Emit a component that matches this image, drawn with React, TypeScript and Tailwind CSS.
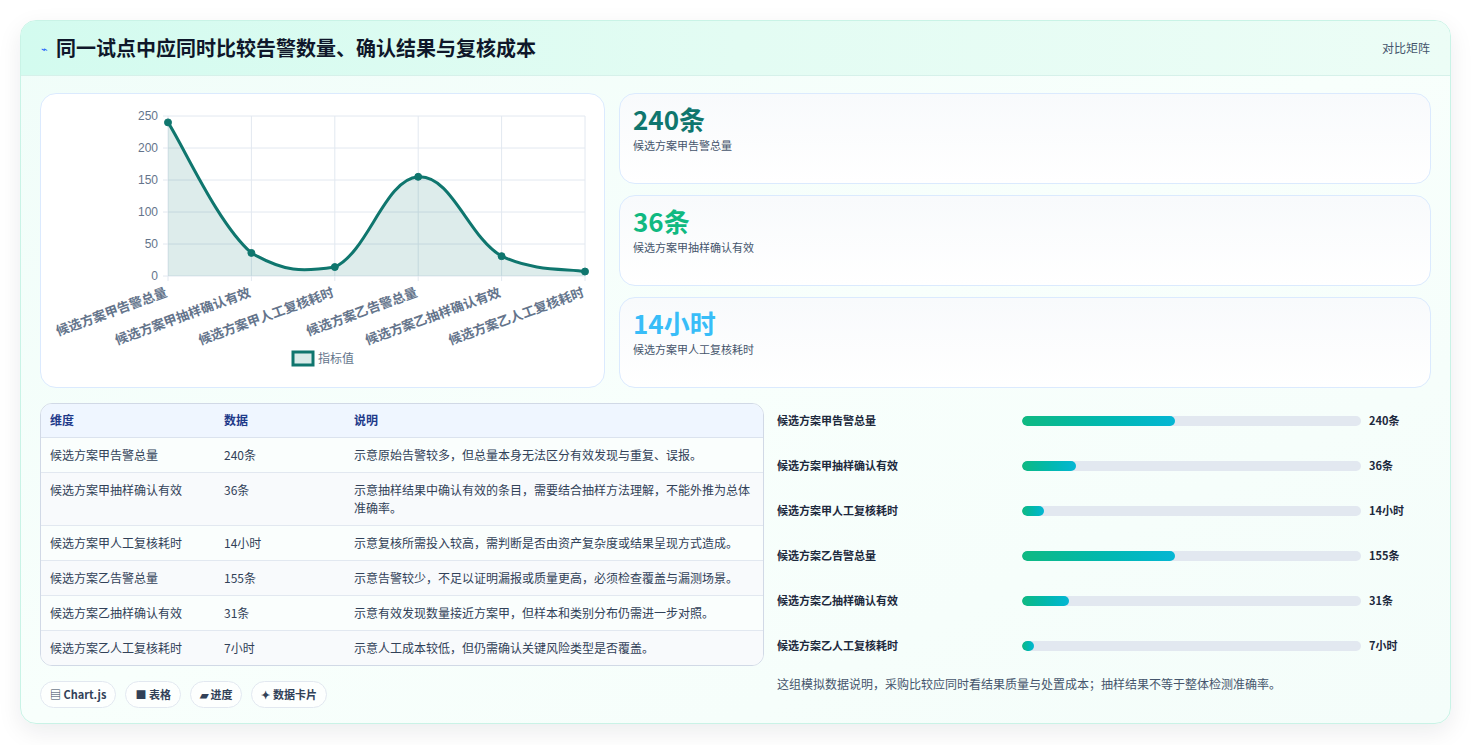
import React from "react";

const labels = ["候选方案甲告警总量","候选方案甲抽样确认有效","候选方案甲人工复核耗时","候选方案乙告警总量","候选方案乙抽样确认有效","候选方案乙人工复核耗时"];
const vals = [240,36,14,155,31,7];
const units = ["240条","36条","14小时","155条","31条","7小时"];
const pct = [45,16,6.5,45,14,3.5];
const desc = [
  "示意原始告警较多，但总量本身无法区分有效发现与重复、误报。",
  "示意抽样结果中确认有效的条目，需要结合抽样方法理解，不能外推为总体准确率。",
  "示意复核所需投入较高，需判断是否由资产复杂度或结果呈现方式造成。",
  "示意告警较少，不足以证明漏报或质量更高，必须检查覆盖与漏测场景。",
  "示意有效发现数量接近方案甲，但样本和类别分布仍需进一步对照。",
  "示意人工成本较低，但仍需确认关键风险类型是否覆盖。",
];

const X0 = 127, X1 = 544, Y0 = 22, Y1 = 182;
const pts = vals.map((v, i) => [X0 + (i * (X1 - X0)) / 5, Y1 - (v * (Y1 - Y0)) / 250]);

function curve() {
  let d = `M${pts[0][0]},${pts[0][1]}`;
  const t = 0.4;
  const cl = (y: number) => Math.min(y, Y1 - 4);
  for (let i = 0; i < pts.length - 1; i++) {
    const p0 = pts[i - 1] || pts[i], p1 = pts[i], p2 = pts[i + 1], p3 = pts[i + 2] || p2;
    const c1 = [p1[0] + (p2[0] - p0[0]) * t / 2, cl(p1[1] + (p2[1] - p0[1]) * t / 2)];
    const c2 = [p2[0] - (p3[0] - p1[0]) * t / 2, cl(p2[1] - (p3[1] - p1[1]) * t / 2)];
    d += ` C${c1[0]},${c1[1]} ${c2[0]},${c2[1]} ${p2[0]},${p2[1]}`;
  }
  return d;
}

function Chart() {
  const d = curve();
  return (
    <svg width="564" height="294" className="block" style={{ fontFamily: "'Noto Sans CJK SC', 'Liberation Sans', sans-serif" }}>
      {[0, 50, 100, 150, 200, 250].map((v) => {
        const y = Y1 - (v * (Y1 - Y0)) / 250;
        return (
          <g key={v}>
            <line x1={X0 - 5} x2={X1} y1={y} y2={y} stroke="#e2e8f0" />
            <text x={X0 - 10} y={y + 4} fontSize="12" fill="#64748b" textAnchor="end" fontFamily="'Liberation Sans', sans-serif">{v}</text>
          </g>
        );
      })}
      {pts.map((p, i) => (
        <line key={i} x1={p[0]} x2={p[0]} y1={Y0} y2={Y1 + 5} stroke="#e2e8f0" />
      ))}
      <path d={`${d} L${X1},${Y1} L${X0},${Y1} Z`} fill="#0f766e" fillOpacity="0.14" />
      <path d={d} fill="none" stroke="#0f766e" strokeWidth="3" />
      {pts.map((p, i) => (
        <circle key={i} cx={p[0]} cy={p[1]} r="3.5" fill="#0f766e" stroke="#0f766e" />
      ))}
      {pts.map((p, i) => (
        <text key={i} x={p[0]} y={Y1 + 20} fontSize="13" fontWeight="600" fill="#64748b" textAnchor="end" transform={`rotate(-20 ${p[0]} ${Y1 + 20})`}>{labels[i]}</text>
      ))}
      <rect x="252" y="258" width="20" height="13" fill="#d9ebe9" stroke="#0f766e" strokeWidth="3" />
      <text x="277" y="269" fontSize="12" fill="#64748b">指标值</text>
    </svg>
  );
}

export default function App() {
  return (
    <div className="min-h-screen bg-white p-5" style={{ fontFamily: "'Noto Sans CJK SC', 'Noto Sans', sans-serif" }}>
      <div className="w-[1431px] h-[704px] rounded-2xl border border-[#c9f3e6] overflow-hidden shadow-[0_8px_24px_rgba(15,23,42,0.08)] bg-gradient-to-br from-[#f0fdf9] via-[#f8fffc] to-[#f4fdfa] flex flex-col">
        <div className="h-[55px] flex items-center justify-between px-5 border-b border-[#d6f1ea] bg-gradient-to-r from-[#d3fbef] via-[#e3fcf3] to-[#ecfdf6]">
          <div className="flex items-center gap-2">
            <span className="text-[11px] text-blue-600">⌁</span>
            <h1 className="text-[20px] font-bold text-[#0f172a]">同一试点中应同时比较告警数量、确认结果与复核成本</h1>
          </div>
          <span className="text-[12px] text-slate-600">对比矩阵</span>
        </div>
        <div className="px-[19px] pt-[17px] flex flex-col">
          <div className="flex gap-[14px]">
            <div className="w-[565px] h-[295px] rounded-2xl border border-[#dbeafe] bg-white overflow-hidden">
              <Chart />
            </div>
            <div className="flex-1 flex flex-col gap-[11px]">
              {[["240条", "text-[#0f766e]", "候选方案甲告警总量"], ["36条", "text-[#10b981]", "候选方案甲抽样确认有效"], ["14小时", "text-[#38bdf8]", "候选方案甲人工复核耗时"]].map(([v, c, l]) => (
                <div key={l} className="h-[91px] rounded-2xl border border-[#dbeafe] bg-gradient-to-b from-[#f8fafc] to-white px-[13px] pt-[8px]">
                  <div className={`text-[26px] font-bold leading-[34px] ${c}`}>{v}</div>
                  <div className="text-[11px] text-slate-600 mt-[1px]">{l}</div>
                </div>
              ))}
            </div>
          </div>
          <div className="flex gap-[13px] mt-[15px]">
            <div className="w-[724px]">
              <div className="rounded-xl border border-[#d1d9e6] overflow-hidden bg-white">
                <table className="w-full text-[12px] border-collapse">
                  <thead>
                    <tr className="bg-[#eff6ff] h-[33px] text-left text-[#1e3a8a] font-bold border-b border-[#dbe3ee]">
                      <th className="pl-[9px] w-[183px] font-bold">维度</th>
                      <th className="w-[130px] font-bold">数据</th>
                      <th className="font-bold">说明</th>
                    </tr>
                  </thead>
                  <tbody>
                    {labels.map((l, i) => (
                      <tr key={l} className={`border-b border-[#e2e8f0] last:border-b-0 text-slate-700 align-top ${i % 2 ? "bg-[#f8fafc]" : "bg-[#fafefd]"}`}>
                        <td className="pl-[9px] py-[8px] leading-[18px]">{l}</td>
                        <td className="py-[8px] leading-[18px]">{units[i]}</td>
                        <td className="py-[8px] pr-[10px] leading-[18px]">{desc[i]}</td>
                      </tr>
                    ))}
                  </tbody>
                </table>
              </div>
              <div className="flex gap-[9px] mt-[15px] text-[11px] text-slate-700 font-semibold">
                {["▤ Chart.js", "■ 表格", "▰ 进度", "✦ 数据卡片"].map((c) => (
                  <span key={c} className="h-[27px] px-[9px] flex items-center rounded-full border border-[#e2e8f0] bg-white/70">{c}</span>
                ))}
              </div>
            </div>
            <div className="flex-1 flex flex-col -mt-[5px]">
              {labels.map((l, i) => (
                <div key={l} className="h-[45px] flex items-center text-[11px] font-semibold text-slate-800">
                  <span className="w-[245px]">{l}</span>
                  <div className="w-[339px] h-[10px] rounded-full bg-[#e2e8f0] overflow-hidden">
                    <div className="h-full rounded-full bg-gradient-to-r from-[#10b981] to-[#06b6d4]" style={{ width: `${pct[i]}%` }} />
                  </div>
                  <span className="ml-[8px] font-bold">{units[i]}</span>
                </div>
              ))}
              <p className="text-[12px] text-slate-600 mt-[7px]">这组模拟数据说明，采购比较应同时看结果质量与处置成本；抽样结果不等于整体检测准确率。</p>
            </div>
          </div>
        </div>
      </div>
    </div>
  );
}
